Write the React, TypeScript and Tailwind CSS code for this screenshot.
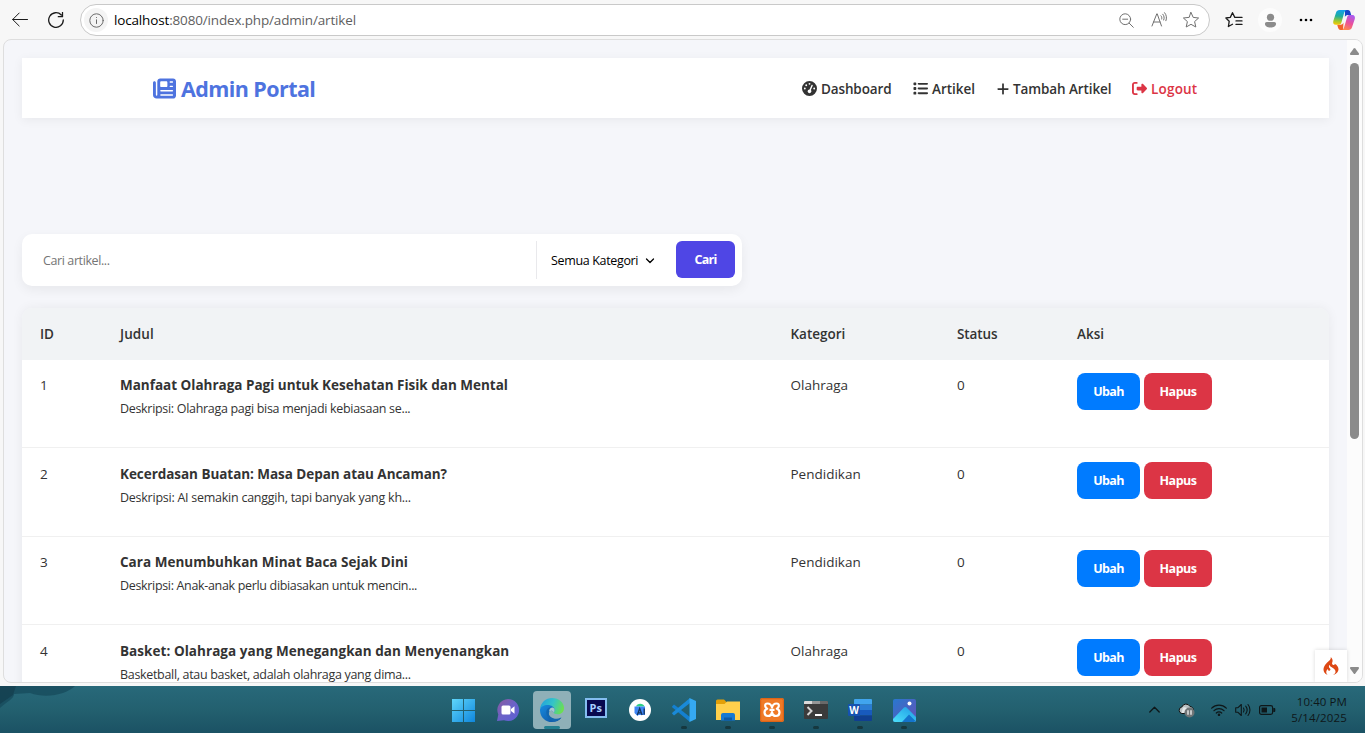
import type { ReactNode } from "react";
import {
  FaNewspaper,
  FaGaugeHigh,
  FaList,
  FaPlus,
  FaRightFromBracket,
} from "react-icons/fa6";
import { SiCodeigniter } from "react-icons/si";

type Article = {
  id: number;
  title: string;
  titleClass: string;
  desc: string;
  descClass: string;
  category: string;
};

const articles: Article[] = [
  {
    id: 1,
    title: "Manfaat Olahraga Pagi untuk Kesehatan Fisik dan Mental",
    titleClass: "tracking-[-0.01px]",
    desc: "Deskripsi: Olahraga pagi bisa menjadi kebiasaan se...",
    descClass: "tracking-[-0.31px]",
    category: "Olahraga",
  },
  {
    id: 2,
    title: "Kecerdasan Buatan: Masa Depan atau Ancaman?",
    titleClass: "tracking-[-0.05px]",
    desc: "Deskripsi: AI semakin canggih, tapi banyak yang kh...",
    descClass: "tracking-[-0.25px]",
    category: "Pendidikan",
  },
  {
    id: 3,
    title: "Cara Menumbuhkan Minat Baca Sejak Dini",
    titleClass: "tracking-[0.02px]",
    desc: "Deskripsi: Anak-anak perlu dibiasakan untuk mencin...",
    descClass: "tracking-[-0.33px]",
    category: "Pendidikan",
  },
  {
    id: 4,
    title: "Basket: Olahraga yang Menegangkan dan Menyenangkan",
    titleClass: "tracking-[0.05px]",
    desc: "Basketball, atau basket, adalah olahraga yang dima...",
    descClass: "tracking-[-0.32px]",
    category: "Olahraga",
  },
];

const stroke = {
  fill: "none",
  stroke: "currentColor",
  strokeLinecap: "round",
  strokeLinejoin: "round",
} as const;

function StarPath() {
  return (
    <path d="M9 1.5 11.2 6.4 16.6 7 12.6 10.6 13.8 16 9 13.3 4.2 16 5.4 10.6 1.4 7 6.8 6.4Z" />
  );
}

function CopilotLogo() {
  return (
    <svg width="24" height="24" viewBox="0 0 24 24">
      <defs>
        <linearGradient id="cpA" x1="0.3" y1="0" x2="0.2" y2="1">
          <stop offset="0" stopColor="#12a0e8" />
          <stop offset="0.4" stopColor="#1fae9c" />
          <stop offset="0.75" stopColor="#a5c92c" />
          <stop offset="1" stopColor="#ffc800" />
        </linearGradient>
        <linearGradient id="cpB" x1="0.7" y1="0" x2="0.3" y2="1">
          <stop offset="0" stopColor="#a95cf0" />
          <stop offset="0.5" stopColor="#ea4f9c" />
          <stop offset="1" stopColor="#ff8a4c" />
        </linearGradient>
      </defs>
      <path d="M13 2h3c1.500 0 2 1 2.400 2.200L19.200 7h-3.500c-1.600 0-2.400 1-2.800 2.200z" fill="#1646c8" />
      <path d="M11 22H8.500c-1.500 0-2-1-2.400-2.200L5.200 16.800h3.600c1.500 0 2.300-1 2.700-2.200z" fill="#f2622c" />
      <path d="M7.600 2H15c-1.700 0-2.400 1.500-2.900 3L9.600 14c-.5 1.800-1.300 2.800-2.800 2.800h-3C1.600 16.800.8 15 1.300 13L4 4.800C4.600 3 5.600 2 7.600 2z" fill="url(#cpA)" />
      <path d="M16.400 22H9.500c1.700 0 2.200-1.500 2.700-3l2.700-9C15.400 8 16 7 17.300 7h3c2.300 0 3 2 2.500 4L20 19.200c-.6 1.800-1.600 2.800-3.600 2.800z" fill="url(#cpB)" />
    </svg>
  );
}

function BrowserBar() {
  return (
    <header className="flex h-[39px] shrink-0 items-center bg-[#f7f7f7] pt-px">
      <svg className="ml-3 text-[#1b1b1b]" width="16" height="16" viewBox="0 0 16 16" {...stroke}>
        <path d="M15.500 7.500H.7M7.200 1 .7 7.500l6.500 6.500" />
      </svg>
      <svg className="ml-5 text-[#1b1b1b]" width="16" height="16" viewBox="0 0 16 16" {...stroke} strokeWidth="1.300">
        <path d="M15.300 8A7.300 7.300 0 1 1 13.300 3M14.500.5v4.200h-4.200" />
      </svg>
      <div className="ml-4 flex h-8 w-[1130px] items-center rounded-full border border-[#c9c9c9] bg-white">
        <div className="ml-[3px] flex size-6 items-center justify-center rounded-full bg-[#f4f4f4] text-[#6a6a6a]">
          <svg width="15" height="15" viewBox="0 0 15 15" {...stroke}>
            <circle cx="7.500" cy="7.500" r="6.700" />
            <path d="M7.500 6.800v3.700M7.500 4.500v.1" />
          </svg>
        </div>
        <span className="ml-[6px] text-[13.500px] tracking-[-0.16px] whitespace-nowrap text-[#5f5f5f]">
          <span className="text-black">localhost</span>:8080/index.php/admin/artikel
        </span>
        <div className="mr-[9px] ml-auto flex items-center text-[#707070]">
          <svg width="15" height="15" viewBox="0 0 15 15" {...stroke}>
            <circle cx="6.200" cy="6.200" r="5.400" />
            <path d="m10.200 10.200 4.100 4.100M3.700 6.200h5" />
          </svg>
          <svg className="ml-[17px]" width="17" height="16" viewBox="0 0 17 16" {...stroke}>
            <path d="M1 14 5.800 1.800h.4L10.500 14M2.500 10h6.500M10 3.800c.8.900 1 2 .7 3.200M11.800 2.200c1.500 1.600 1.700 4 .9 5.800M13.600.7c2.100 2.500 2.300 5.500 1.300 8" />
          </svg>
          <svg className="ml-[14px]" width="18" height="18" viewBox="0 0 18 18" {...stroke}>
            <StarPath />
          </svg>
        </div>
      </div>
      <svg className="ml-[15px] text-[#1b1b1b]" width="18" height="18" viewBox="0 0 18 18" {...stroke} strokeWidth="1.300">
        <path d="M9.800 6.400 7.500 1.700 5.300 6.400.9 7l3.300 3.300-.8 5.200 4.100-2.200M9.800 6.400H17M11 9.900h6M11 13.400h6" />
      </svg>
      <div className="ml-[15px] flex size-6 items-center justify-center rounded-full bg-[#fcfcfc]">
        <svg width="13" height="15" viewBox="0 0 14 16" fill="#8c8c8c">
          <circle cx="7" cy="4.500" r="3.900" />
          <path d="M3 9.500h8a2 2 0 0 1 2 2c0 2.500-2.500 4-6 4s-6-1.500-6-4a2 2 0 0 1 2-2z" />
        </svg>
      </div>
      <svg className="ml-[17px]" width="14" height="4" viewBox="0 0 14 4">
        <circle cx="2" cy="2" r="1.300" />
        <circle cx="7" cy="2" r="1.300" />
        <circle cx="12" cy="2" r="1.300" />
      </svg>
      <div className="ml-[19px]">
        <CopilotLogo />
      </div>
    </header>
  );
}

function NavItem({ className, children }: { className: string; children: ReactNode }) {
  return <a className={`flex items-center font-semibold whitespace-nowrap ${className}`}>{children}</a>;
}

function Navbar() {
  return (
    <nav className="flex h-[60px] items-center bg-white pt-px shadow-[0_2px_10px_rgba(0,0,0,0.06)]">
      <div className="ml-[131px] flex w-[649px] items-center gap-[5px] text-[#4e73df]">
        <FaNewspaper size={23} />
        <span className="pt-0.5 text-[21.500px] font-bold tracking-[-0.58px] whitespace-nowrap">Admin Portal</span>
      </div>
      <div className="flex text-[13.500px] text-[#333]">
        <NavItem className="w-[111px] gap-1 tracking-[-0.13px]">
          <FaGaugeHigh size={15} />
          <span className="pt-0.5">Dashboard</span>
        </NavItem>
        <NavItem className="w-[83px] gap-1">
          <FaList size={15} />
          <span className="pt-0.5">Artikel</span>
        </NavItem>
        <NavItem className="w-[136px] gap-[3px] tracking-[-0.1px]">
          <FaPlus size={14} />
          <span className="pt-0.5">Tambah Artikel</span>
        </NavItem>
        <NavItem className="gap-1 tracking-[0.2px] text-[#dc3545]">
          <FaRightFromBracket size={15} />
          <span className="pt-0.5">Logout</span>
        </NavItem>
      </div>
    </nav>
  );
}

function SearchBar() {
  return (
    <form className="mt-[116px] flex h-[52px] w-[720px] items-center rounded-[10px] bg-white shadow-[0_4px_12px_rgba(0,0,0,0.06)]">
      <span className="ml-[21px] w-[493px] pt-0.5 text-[12.500px] tracking-[-0.4px] text-[#757575]">Cari artikel...</span>
      <div className="flex h-[38px] w-[140px] items-center border-l border-[#e9e9ec] pt-0.5 pl-[14px] text-black">
        <span className="w-[94px] text-[12.500px] tracking-[-0.34px] whitespace-nowrap">Semua Kategori</span>
        <svg width="10" height="6" viewBox="0 0 10 6" {...stroke} strokeWidth="1.300">
          <path d="M1.500 1 5 4.500 8.500 1" />
        </svg>
      </div>
      <button className="mb-0.5 h-[37px] w-[59px] rounded-md bg-[#4f46e5] pt-0.5 text-[12.500px] font-bold tracking-[-0.7px] text-white">
        Cari
      </button>
    </form>
  );
}

const columns = "grid grid-cols-[80px_670.5px_166.5px_120px_1fr] pl-[18px]";

function ArticleTable() {
  return (
    <section className="mt-[22px] overflow-hidden rounded-t-[10px] shadow-[0_0_12px_rgba(0,0,0,0.06)]">
      <div
        className={`${columns} h-[51.75px] items-center bg-[#f1f3f5] text-[13.500px] font-semibold text-[#333]`}
      >
        <span>ID</span>
        <span className="tracking-[0.1px]">Judul</span>
        <span>Kategori</span>
        <span className="tracking-[-0.1px]">Status</span>
        <span>Aksi</span>
      </div>
      {articles.map((a) => (
        <div
          key={a.id}
          className={`${columns} h-[88.5px] items-start border-b border-[#f0f0f0] bg-white pt-[13.25px] text-[13.500px] leading-6 text-[#333]`}
        >
          <span>{a.id}</span>
          <div className="whitespace-nowrap">
            <p className={`font-bold ${a.titleClass}`}>{a.title}</p>
            <p className={`text-[12.500px] leading-[23px] ${a.descClass}`}>{a.desc}</p>
          </div>
          <span>{a.category}</span>
          <span>0</span>
          <div className="flex gap-1 text-[12.500px] font-bold text-white">
            <button className="h-[37px] w-[63px] rounded-lg bg-[#007bff] pt-px tracking-[-0.6px]">Ubah</button>
            <button className="h-[37px] w-[68px] rounded-lg bg-[#dc3545] pt-px tracking-[-0.5px]">Hapus</button>
          </div>
        </div>
      ))}
    </section>
  );
}

function Scrollbar() {
  return (
    <div className="flex w-[15px] shrink-0 flex-col items-center bg-[#fcfcfc]">
      <svg className="mt-2 shrink-0" width="9" height="7" viewBox="0 0 9 7" fill="#8b8b8b">
        <path d="M3.700.6a1 1 0 0 1 1.600 0L8.800 5.300c.5.700 0 1.700-.8 1.700H1C.2 7-.3 6 .2 5.300z" />
      </svg>
      <div className="mt-2 h-[376px] w-[9px] shrink-0 rounded-full bg-[#8b8b8b]" />
      <svg className="mt-auto mb-2 shrink-0" width="9" height="7" viewBox="0 0 9 7" fill="#8b8b8b">
        <path d="M3.700 6.400a1 1 0 0 0 1.600 0l3.500-4.700C9.300 1 8.800 0 8 0H1C.2 0-.3 1 .2 1.700z" />
      </svg>
    </div>
  );
}

function TaskSlot({ children, active, running }: { children: ReactNode; active?: boolean; running?: boolean }) {
  return (
    <div
      className={`flex h-[38px] w-[38px] shrink-0 flex-col items-center pt-[7px] ${active ? "rounded-[4px] bg-[#8fb0b8]" : ""}`}
    >
      <div className="flex h-6 items-center">{children}</div>
      {active && <div className="mt-1 h-[3px] w-4 rounded-full bg-[#237f90]" />}
      {running && <div className="mt-1 h-[3px] w-1.5 rounded-full bg-[#16383f]" />}
    </div>
  );
}

function TaskIcons() {
  return (
    <div className="flex w-[480px] gap-[6.100px] pt-[5px]">
      <TaskSlot>
        <svg width="23" height="23" viewBox="0 0 23 23">
          <defs>
            <linearGradient id="win" x1="0" y1="0" x2="1" y2="1">
              <stop offset="0" stopColor="#5fd6fb" />
              <stop offset="1" stopColor="#0f86dc" />
            </linearGradient>
          </defs>
          <path d="M0 0h11v11H0zM12 0h11v11H12zM0 12h11v11H0zM12 12h11v11H12z" fill="url(#win)" />
        </svg>
      </TaskSlot>
      <TaskSlot>
        <svg width="24" height="24" viewBox="0 0 24 24">
          <defs>
            <linearGradient id="chat" x1="0" y1="0" x2="1" y2="1">
              <stop offset="0" stopColor="#8a5a9c" />
              <stop offset="0.5" stopColor="#6b62c8" />
              <stop offset="1" stopColor="#5a5fd4" />
            </linearGradient>
          </defs>
          <path d="M12 1a11 11 0 1 1-4 21.200L1 23l1.300-6.500A11 11 0 0 1 12 1z" fill="url(#chat)" />
          <rect x="5.500" y="7.500" width="9" height="9" rx="1.500" fill="#fff" />
          <path d="m15 11 3.500-2.700v7.400L15 13z" fill="#fff" />
        </svg>
      </TaskSlot>
      <TaskSlot active>
        <svg width="24" height="24" viewBox="0 0 24 24">
          <defs>
            <linearGradient id="edgeTop" x1="0" y1="0.3" x2="1" y2="0.6">
              <stop offset="0" stopColor="#23a3dc" />
              <stop offset="0.5" stopColor="#34c4c8" />
              <stop offset="1" stopColor="#6ee04c" />
            </linearGradient>
            <linearGradient id="edgeLow" x1="0" y1="0" x2="1" y2="1">
              <stop offset="0" stopColor="#178ce0" />
              <stop offset="1" stopColor="#0f4f9c" />
            </linearGradient>
          </defs>
          <path d="M0 11C.8 4.500 5.800 0 12 0c7 0 12 4.600 12 10 0 4-3 6.300-6.300 6.300-2.600 0-4-.8-4-1.700 0-.7.900-1 .9-2.700 0-2.300-2.200-4-5-4C5 7.900.6 9.500 0 11z" fill="url(#edgeTop)" />
          <path d="M0 11.500C.8 8.500 4 6.900 7.500 6.900c4.200 0 7.100 2.200 7.100 4.900 0 1.600-.9 2-.9 2.800-1-2.300-3.400-2.500-4.500-.6-1.400 2.700.6 6.500 5 7.200 3.200.5 5.800-.8 7.200-1.700C19.500 22.500 16 24 12 24 5 24-.3 18.500 0 11.500z" fill="url(#edgeLow)" />
          <path d="M9.400 9.600C6 11 5.500 15 7.500 18.500 9.500 22 13 24 15.500 23.300c2.800-.8 4.800-2.200 5.900-3.800-6 3.200-12.900-.2-12.700-4.500.1-2.200 2.700-3.300 4.500-1.700-.3-2-1.900-3.700-3.800-3.700z" fill="#1267b0" />
          <path d="M13.700 14.600c0-.7.900-1 .9-2.700 0-1.300-1-2.200-2.400-2.400-2 .2-3.300 1.800-3 4.500 1-1.600 3.500-1.700 4.500.6z" fill="#a9c6d0" />
        </svg>
      </TaskSlot>
      <TaskSlot>
        <div className="-mt-1 flex h-5 w-[22px] items-center justify-center border-2 border-[#84bdf0] bg-[#08094f] text-[11px] font-bold text-[#a8d0ff]">
          Ps
        </div>
      </TaskSlot>
      <TaskSlot>
        <svg width="22" height="22" viewBox="0 0 22 22">
          <circle cx="11" cy="11" r="11" fill="#fff" />
          <path d="M7 7.500a4.500 4 0 0 1 8.500 0z" fill="#2fcf86" />
          <path d="M5.500 7.500H16V16H9.500l-1 1-3-3z" fill="#3f86f5" />
          <path d="m8.300 16 2.400-6.500 2.400 6.500M9.500 13.800h2.500M15.200 9.500v6" fill="none" stroke="#12335c" strokeWidth="1.300" />
        </svg>
      </TaskSlot>
      <TaskSlot running>
        <svg width="24" height="24" viewBox="0 0 24 24">
          <path d="M0 8.500 2 6.500l16 12.500v5L.5 9.500z" fill="#1480d0" />
          <path d="m0 15.500 2 2L18 5V0L.5 14.500z" fill="#1a8ad8" />
          <path d="m17.500 0 6.500 3v18l-6.500 3z" fill="#35a9f2" />
        </svg>
      </TaskSlot>
      <TaskSlot running>
        <svg width="24" height="22" viewBox="0 0 24 22">
          <path d="M0 2Q0 .5 1.500.5H8L10.500 3v3H0z" fill="#e3a008" />
          <path d="M0 5h8.500l2.500-2.500h13V21H0z" fill="#ffd04c" />
          <path d="M5 21.500v-5.500q0-2 2-2h10q2 0 2 2v5.500z" fill="#1579d3" />
          <path d="M8 21.500v-3h8v3z" fill="#0c5aa6" />
        </svg>
      </TaskSlot>
      <TaskSlot running>
        <svg width="24" height="24" viewBox="0 0 24 24">
          <rect width="24" height="24" rx="2" fill="#ef7a26" />
          <rect x=".7" y=".7" width="22.600" height="22.600" rx="1.500" fill="none" stroke="#d95f14" />
          <path
            d="M9.500 11.800h5M12 9.500Q11 5.500 7.500 5.500 4.800 5.500 5.200 8q.3 2 2 2.800-2.700.8-2.700 3.700.2 3.500 3.500 3.500 3.500 0 4-4 .5 4 4 4 3.300 0 3.500-3.500 0-2.900-2.700-3.700 1.700-.8 2-2.800.4-2.500-2.300-2.500Q13 5.500 12 9.500z"
            fill="none"
            stroke="#fff"
            strokeWidth="2.200"
            strokeLinejoin="round"
          />
        </svg>
      </TaskSlot>
      <TaskSlot running>
        <svg width="24" height="18" viewBox="0 0 24 18">
          <rect width="24" height="18" rx="1" fill="#3b3b3b" />
          <path d="M0 3V1q0-1 1-1h7v3z" fill="#dadada" />
          <path d="M8 0h8v3H8z" fill="#969696" />
          <path d="M16 0h7q1 0 1 1v2h-8z" fill="#696969" />
          <path d="m3.500 6 4 4-4 4" fill="none" stroke="#d5d5d5" strokeWidth="2" />
          <path d="M11 14h7" stroke="#fff" strokeWidth="2" />
        </svg>
      </TaskSlot>
      <TaskSlot running>
        <svg width="24" height="22" viewBox="0 0 24 22">
          <path d="M6 5.500V1q0-1 1-1h16q1 0 1 1v4.500z" fill="#41a5ee" />
          <path d="M6 5.500h18V11H6z" fill="#2b7cd3" />
          <path d="M6 11h18v5.500H6z" fill="#185abd" />
          <path d="M6 16.500h18V21q0 1-1 1H7q-1 0-1-1z" fill="#103f91" />
          <rect y="5" width="12" height="12" rx="1" fill="#1552b0" />
          <text x="6" y="14.800" textAnchor="middle" fontSize="10" fontWeight="700" fill="#fff">
            W
          </text>
        </svg>
      </TaskSlot>
      <TaskSlot running>
        <svg width="23" height="23" viewBox="0 0 23 23">
          <defs>
            <linearGradient id="photo" x1="0" y1="0" x2="1" y2="1">
              <stop offset="0" stopColor="#2878cf" />
              <stop offset="1" stopColor="#6452b8" />
            </linearGradient>
            <linearGradient id="hill" x1="0" y1="1" x2="1" y2="0">
              <stop offset="0" stopColor="#4ce0fa" />
              <stop offset="1" stopColor="#1d98e4" />
            </linearGradient>
          </defs>
          <rect width="23" height="23" rx="2" fill="url(#photo)" />
          <path d="M0 20 11 8.500q1.300-1.200 2.600 0L23 18v3q0 2-2 2H2q-2 0-2-2z" fill="url(#hill)" />
          <path d="M9 23 16 15.500 22.500 22l-1.500 1z" fill="#1474cc" />
          <circle cx="16.500" cy="4.500" r="2" fill="#fff" />
        </svg>
      </TaskSlot>
    </div>
  );
}

function Tray() {
  return (
    <div className="ml-auto flex items-center pr-[18px] text-[#0e1719]">
      <svg width="11" height="7" viewBox="0 0 11 7" {...stroke} strokeWidth="1.300">
        <path d="M.8 6 5.500 1.200 10.200 6" />
      </svg>
      <svg className="ml-[18px]" width="17" height="16" viewBox="0 0 17 16">
        <path d="M4 11.500a3.300 3.300 0 0 1-.2-6.500A4.500 4.500 0 0 1 12 4.500c2 .3 3.500 1.500 3.500 3.800v3.200z" fill="#b9c0c2" stroke="#111" />
        <path d="M5 5.500Q9 4.500 11 8L6 11H3.500z" fill="#e4e7e8" />
        <circle cx="11.500" cy="10.500" r="5" fill="#6f7577" />
        <path d="M10 8.300v4.400M13 8.300v4.400" stroke="#fff" strokeWidth="1.200" />
      </svg>
      <svg className="ml-4" width="16" height="12" viewBox="0 0 16 12" {...stroke} strokeWidth="1.200">
        <path d="M.7 4.200a10.300 10.300 0 0 1 14.600 0M3 6.700a7 7 0 0 1 10 0M5.300 9a3.800 3.800 0 0 1 5.400 0" />
        <circle cx="8" cy="10.800" r=".7" fill="currentColor" />
      </svg>
      <svg className="ml-2" width="16" height="14" viewBox="0 0 16 14" {...stroke} strokeWidth="1.100">
        <path d="M.7 4.700H3L6.300 1.500v11L3 9.300H.7zM8.500 5c.8 1.200.8 2.800 0 4M10.700 3.200c1.700 2.200 1.700 5.400 0 7.600M13 1.500c2.600 3.200 2.600 7.800 0 11" />
      </svg>
      <svg className="ml-2" width="17" height="10" viewBox="0 0 17 10">
        <rect x=".6" y=".6" width="13" height="8.800" rx="1.800" fill="none" stroke="currentColor" strokeWidth="1.200" />
        <path d="M2.500 2.500H8v5H2.500zM14.300 3h1q1 0 1 1v2q0 1-1 1h-1z" fill="currentColor" />
      </svg>
      <div className="ml-[15px] flex w-14 flex-col items-end text-[11.500px] leading-4 whitespace-nowrap">
        <p className="tracking-[0.08px]">10:40 PM</p>
        <p className="tracking-[0.15px]">5/14/2025</p>
      </div>
    </div>
  );
}

function Taskbar() {
  return (
    <footer className="relative flex h-[47px] shrink-0 bg-linear-to-b from-[#28697a] via-[#23606f] to-[#1b5264]">
      <svg className="absolute top-0 left-0 opacity-80" width="80" height="24" viewBox="0 0 80 24">
        <path d="M0 0h75c-8 8-28 13-45 7L14 8c0 5-8 8-14 14z" fill="#184c5d" />
        <path d="M0 0h16l-3 9L0 18z" fill="#123b4b" />
      </svg>
      <div className="w-[444.5px] shrink-0" />
      <TaskIcons />
      <Tray />
    </footer>
  );
}

export default function App() {
  return (
    <div className="flex h-[733px] w-[1365px] flex-col overflow-hidden bg-[#f7f7f7] font-['Open_Sans','Noto_Sans',sans-serif]">
      <BrowserBar />
      <div className="relative mr-[2px] mb-[3px] ml-[3px] flex min-h-0 flex-1 overflow-hidden rounded-lg border border-[#dedede] bg-[#f5f6fa]">
        <main className="min-w-0 flex-1 pt-[18px] pr-[18px] pl-[18px]">
          <Navbar />
          <SearchBar />
          <ArticleTable />
        </main>
        <Scrollbar />
        <div className="absolute right-[15px] bottom-0 flex h-8 w-8 items-center justify-center bg-white shadow-[0_0_4px_rgba(0,0,0,0.15)]">
          <SiCodeigniter size={18} color="#dd4814" />
        </div>
      </div>
      <Taskbar />
    </div>
  );
}
